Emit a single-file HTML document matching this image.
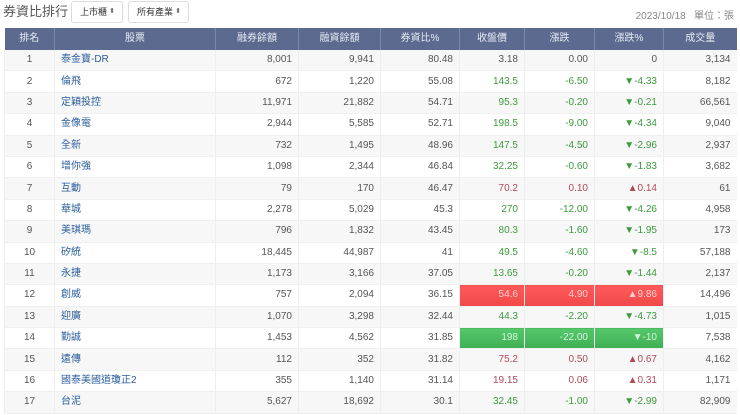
<!DOCTYPE html><html><head><meta charset="utf-8"><style>
body{margin:0;background:#fff;font-family:"Liberation Sans","Noto Sans CJK TC",sans-serif;color:#555;width:740px;height:415px;overflow:hidden;position:relative}
.t{position:absolute;left:3px;top:3px;font-size:13px;line-height:18px;color:#555}
.s{position:absolute;top:1px;height:22px;border:1px solid #ddd;border-radius:3px;font-size:9px;line-height:20px;padding-left:8px;box-sizing:border-box;color:#333;white-space:nowrap}
.s span{position:absolute;right:7px;top:0;font-size:7px;color:#666}
.d{position:absolute;right:6px;top:7px;font-size:10px;color:#888}
table{position:absolute;left:4px;top:28px;width:732px;border-collapse:collapse;table-layout:fixed;font-size:10px}
th{background:#5b6a8e;color:#e8ecf4;font-weight:normal;height:22px;border-left:1px solid #7a88a8;padding:0;line-height:14px}
th:first-child{border-left:none}
td{height:20.4px;line-height:14px;padding:0 6px;text-align:right;border-left:1px solid #eee;border-bottom:1px solid #f0f0f0;white-space:nowrap;vertical-align:middle}
td:nth-child(1){text-align:center}
td:nth-child(2){text-align:left;color:#2a5d9c}
tr:nth-child(even) td{background:#f7f7f7}
.g{color:#3d9a3d}.r{color:#b04a5a}
td.R{background:linear-gradient(#ff5a5a,#f04848)!important;color:#ffd0d0}
td.G{background:linear-gradient(#55c86a,#3fae55)!important;color:#d8f5dc}
</style></head><body>
<div class="t">券資比排行</div>
<div class="s" style="left:71px;width:52px">上市櫃<span>⬍</span></div>
<div class="s" style="left:128px;width:61px">所有產業<span>⬍</span></div>
<div class="d">2023/10/18&nbsp;&nbsp;&nbsp;單位：張</div>
<table>
<colgroup><col style="width:50px"><col style="width:161px"><col style="width:83px"><col style="width:82px"><col style="width:79px"><col style="width:65px"><col style="width:70px"><col style="width:69px"><col style="width:73px"></colgroup>
<tr><th>排名</th><th>股票</th><th>融券餘額</th><th>融資餘額</th><th>券資比%</th><th>收盤價</th><th>漲跌</th><th>漲跌%</th><th>成交量</th></tr>
<tr><td>1</td><td>泰金寶-DR</td><td>8,001</td><td>9,941</td><td>80.48</td><td>3.18</td><td>0.00</td><td>0</td><td>3,134</td></tr>
<tr><td>2</td><td>倫飛</td><td>672</td><td>1,220</td><td>55.08</td><td class="g">143.5</td><td class="g">-6.50</td><td class="g">▼-4.33</td><td>8,182</td></tr>
<tr><td>3</td><td>定穎投控</td><td>11,971</td><td>21,882</td><td>54.71</td><td class="g">95.3</td><td class="g">-0.20</td><td class="g">▼-0.21</td><td>66,561</td></tr>
<tr><td>4</td><td>金像電</td><td>2,944</td><td>5,585</td><td>52.71</td><td class="g">198.5</td><td class="g">-9.00</td><td class="g">▼-4.34</td><td>9,040</td></tr>
<tr><td>5</td><td>全新</td><td>732</td><td>1,495</td><td>48.96</td><td class="g">147.5</td><td class="g">-4.50</td><td class="g">▼-2.96</td><td>2,937</td></tr>
<tr><td>6</td><td>增你強</td><td>1,098</td><td>2,344</td><td>46.84</td><td class="g">32.25</td><td class="g">-0.60</td><td class="g">▼-1.83</td><td>3,682</td></tr>
<tr><td>7</td><td>互動</td><td>79</td><td>170</td><td>46.47</td><td class="r">70.2</td><td class="r">0.10</td><td class="r">▲0.14</td><td>61</td></tr>
<tr><td>8</td><td>華城</td><td>2,278</td><td>5,029</td><td>45.3</td><td class="g">270</td><td class="g">-12.00</td><td class="g">▼-4.26</td><td>4,958</td></tr>
<tr><td>9</td><td>美琪瑪</td><td>796</td><td>1,832</td><td>43.45</td><td class="g">80.3</td><td class="g">-1.60</td><td class="g">▼-1.95</td><td>173</td></tr>
<tr><td>10</td><td>矽統</td><td>18,445</td><td>44,987</td><td>41</td><td class="g">49.5</td><td class="g">-4.60</td><td class="g">▼-8.5</td><td>57,188</td></tr>
<tr><td>11</td><td>永捷</td><td>1,173</td><td>3,166</td><td>37.05</td><td class="g">13.65</td><td class="g">-0.20</td><td class="g">▼-1.44</td><td>2,137</td></tr>
<tr><td>12</td><td>創威</td><td>757</td><td>2,094</td><td>36.15</td><td class="R">54.6</td><td class="R">4.90</td><td class="R">▲9.86</td><td>14,496</td></tr>
<tr><td>13</td><td>迎廣</td><td>1,070</td><td>3,298</td><td>32.44</td><td class="g">44.3</td><td class="g">-2.20</td><td class="g">▼-4.73</td><td>1,015</td></tr>
<tr><td>14</td><td>勤誠</td><td>1,453</td><td>4,562</td><td>31.85</td><td class="G">198</td><td class="G">-22.00</td><td class="G">▼-10</td><td>7,538</td></tr>
<tr><td>15</td><td>遠傳</td><td>112</td><td>352</td><td>31.82</td><td class="r">75.2</td><td class="r">0.50</td><td class="r">▲0.67</td><td>4,162</td></tr>
<tr><td>16</td><td>國泰美國道瓊正2</td><td>355</td><td>1,140</td><td>31.14</td><td class="r">19.15</td><td class="r">0.06</td><td class="r">▲0.31</td><td>1,171</td></tr>
<tr><td>17</td><td>台泥</td><td>5,627</td><td>18,692</td><td>30.1</td><td class="g">32.45</td><td class="g">-1.00</td><td class="g">▼-2.99</td><td>82,909</td></tr>
</table>
</body></html>
